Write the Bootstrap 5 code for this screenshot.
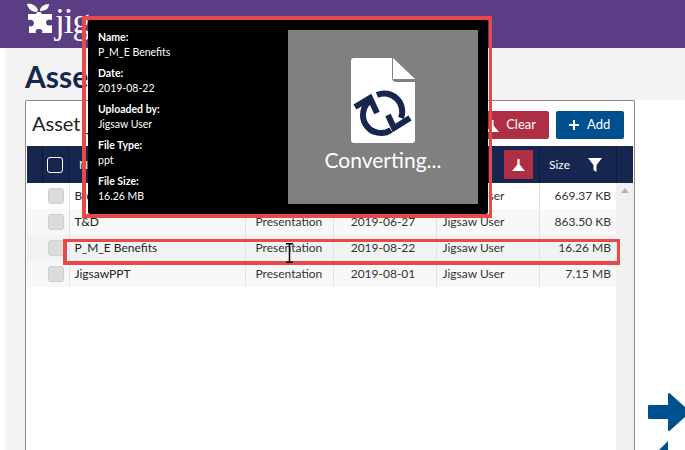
<!DOCTYPE html>
<html lang="en">
<head>
  <meta charset="UTF-8">
  <title>Assets</title>
  <link rel="stylesheet" href="https://cdn.jsdelivr.net/npm/bootstrap@5.3.0/dist/css/bootstrap.min.css">
  <style>
    html, body { height: 450px; overflow: hidden; }
    body { font-family: Lato, "Open Sans", sans-serif; background: #fff; color: #333; position: relative; }

    .top-bar { height: 48px; background: #5a3d82; padding-left: 27px; color: #fff; overflow: hidden; }
    .brand-logo { margin-top: 3px; flex: none; }
    .brand-name { font-family: "Liberation Serif", serif; font-size: 35px; line-height: 44px; margin-left: 2px; letter-spacing: -1px; }

    .page-wrap { margin-left: 5px; background: #f3f3f3; height: 402px; }
    .page-title { height: 52px; margin: 0; padding: 11px 0 0 20px; font-size: 30px; font-weight: 700; color: #16264f; line-height: 34px; }
    .page-row { height: 350px; padding-left: 20px; }
    .side-col { flex: 1; background: #fff; padding: 293px 0 0 13px; overflow: hidden; }
    .arrow-next { display: block; }
    .arrow-prev { display: block; margin-top: 10px; }

    .asset-panel { width: 610px; flex: none; background: #fff; border: 1px solid #8a8a8a; border-bottom: 0; border-radius: 2px 2px 0 0; padding: 0 1px; }
    .panel-head { height: 45px; padding: 10px 9px 0 5px; }
    .panel-name { font-size: 20px; color: #222; line-height: 25px; }
    .act-btn { height: 28px; font-size: 13px; padding: 0 12px; border-radius: 2px; color: #fff; border: 0; display: flex; align-items: center; gap: 7px; }
    .act-clear { background: #b02e44; width: 88px; padding-right: 13px; justify-content: flex-end; }
    .act-add { background: #00508f; width: 68px; margin-left: 7px; }

    .asset-table { table-layout: fixed; width: 589px; margin: 0; font-size: 12px; }
    .asset-table td { height: 26px; padding: 0 5px 0 6px; vertical-align: middle; border: 0; border-right: 1px solid #e2e2e2; color: #333; white-space: nowrap; overflow: hidden; }
    .asset-table tr:nth-child(even) td { background: #f8f8f8; }
    .asset-table tr.row-hover td { background: #f2f2f2; }
    .asset-table td.chk-cell { padding: 0 0 0 21px; }
    .asset-table td.name-cell { padding-left: 5px; color: #222; }
    .asset-table td.type-cell { padding-left: 10px; }
    .asset-table td.date-cell { text-align: center; padding: 0 3px 0 0; }
    .asset-table td.size-cell { text-align: right; padding-right: 5px; border-right: 0; }
    .col-chk { width: 42px; }
    .col-name { width: 176px; }
    .col-type { width: 88px; }
    .col-date, .col-user { width: 103px; }
    .col-size { width: 77px; }

    .head-row { height: 37px; background: #16264f; color: #fff; font-size: 12px; }
    .head-cell { height: 37px; display: flex; align-items: center; border-right: 1px solid #0e1a3a; flex: none; }
    .hc-gap { width: 16px; }
    .hc-chk { width: 26px; padding-left: 4px; }
    .hc-name { width: 176px; padding-left: 10px; }
    .hc-type { width: 88px; }
    .hc-date { width: 103px; }
    .hc-user { width: 104px; padding-right: 6px; justify-content: flex-end; }
    .hc-size { width: 77px; padding-left: 9px; }
    .size-filter { margin-left: auto; margin-right: 14px; }
    .fake-chk { display: block; width: 16px; height: 16px; border-radius: 3px; }
    .fake-chk-head { border: 1px solid #fff; }
    .fake-chk-row { background: #dcdcdc; border: 1px solid #cfcfcf; }
    .filter-red { width: 29px; height: 29px; background: #b02e44; display: flex; align-items: center; justify-content: center; }

    .scroll-rail { width: 18px; flex: none; height: 267px; background: #f0f0f0; padding-top: 5px; }
    .scroll-up { display: block; margin: 0 auto; width: 0; height: 0; border-left: 4px solid transparent; border-right: 4px solid transparent; border-bottom: 5px solid #b5b5b5; }

    /* overlays */
    .preview-tip { position: absolute; left: 88px; top: 20px; width: 400px; height: 194px; background: #000; border-radius: 2px; color: #fff; padding: 10px; font-size: 10.5px; line-height: 15px; }
    .tip-info { width: 190px; margin: 0; padding-top: 0; }
    .tip-info dt { font-weight: 700; margin: 0; }
    .tip-info dd { margin: 0 0 6px; }
    .tip-thumb { width: 190px; height: 174px; background: #808080; color: #fff; font-size: 21px; line-height: 24px; }
    .doc-icon { margin-top: 28px; flex: none; }
    .thumb-label { margin-top: 5px; }
    .mark-box { position: absolute; border: 4px solid #e8484a; pointer-events: none; }
    .mark-tip { left: 82px; top: 16px; width: 410px; height: 202px; border-right-width: 3px; }
    .mark-row { left: 63px; top: 239px; width: 557px; height: 26px; border-width: 3px 3px 4px 4px; }
    .text-cursor { position: absolute; left: 285px; top: 243px; }
  </style>
</head>
<body>

  <!-- top bar -->
  <div class="top-bar d-flex align-items-start">
    <svg class="brand-logo" width="26" height="31" viewBox="0 0 26 31">
      <path fill="#fff" d="M1 11h9c-1-1-1-2 2-2s3 1 2 2h11v6c-2-1-6-1-6 2.500s4 3.500 6 2.500v8H15c1-2 0-4-3-4s-4 2-3 4H2v-7c2 1 5 0 5-3s-3-4-6-3z"/>
      <path fill="#fff" d="M0 1c4-1 9 1 11 6-1 1-1 2-1 2C5 9 1 6 0 1zM13 8c0-4 4-7 9-7 0 5-4 7-9 7z"/>
    </svg>
    <span class="brand-name">jigsaw</span>
  </div>

  <div class="page-wrap">
    <h1 class="page-title">Assets</h1>
    <div class="page-row d-flex">
      <div class="asset-panel">
        <div class="panel-head d-flex align-items-start">
          <span class="panel-name">Asset _</span>
          <button class="act-btn act-clear ms-auto">
            <svg width="13" height="13" viewBox="0 0 13 13"><path fill="#fff" d="M0 13h13L7.600 6.500V1H5.400v5.500z"/></svg>
            Clear
          </button>
          <button class="act-btn act-add">
            <svg width="12" height="12" viewBox="0 0 12 12"><path d="M6 1v10M1 6h10" stroke="#fff" stroke-width="2"/></svg>
            Add
          </button>
        </div>

        <div class="head-row d-flex">
          <div class="head-cell hc-gap"></div>
          <div class="head-cell hc-chk"><span class="fake-chk fake-chk-head"></span></div>
          <div class="head-cell hc-name">Name</div>
          <div class="head-cell hc-type"></div>
          <div class="head-cell hc-date"></div>
          <div class="head-cell hc-user">
            <span class="filter-red">
              <svg width="13" height="13" viewBox="0 0 13 13"><path fill="#fff" d="M0 13h13L7.600 6.500V1H5.400v5.500z"/></svg>
            </span>
          </div>
          <div class="head-cell hc-size">
            Size
            <svg class="size-filter" width="14" height="14" viewBox="0 0 14 14"><path fill="#fff" d="M0 0h14L8.500 7v7L5.500 12V7z"/></svg>
          </div>
        </div>

        <div class="d-flex align-items-start">
          <table class="table asset-table">
            <colgroup>
              <col class="col-chk"><col class="col-name"><col class="col-type">
              <col class="col-date"><col class="col-user"><col class="col-size">
            </colgroup>
            <tbody>
              <tr><td class="chk-cell"><span class="fake-chk fake-chk-row"></span></td><td class="name-cell">Brochure</td><td class="type-cell">Presentation</td><td class="date-cell">2019-06-27</td><td>Jigsaw User</td><td class="size-cell">669.37 KB</td></tr>
              <tr><td class="chk-cell"><span class="fake-chk fake-chk-row"></span></td><td class="name-cell">T&amp;D</td><td class="type-cell">Presentation</td><td class="date-cell">2019-06-27</td><td>Jigsaw User</td><td class="size-cell">863.50 KB</td></tr>
              <tr class="row-hover"><td class="chk-cell"><span class="fake-chk fake-chk-row"></span></td><td class="name-cell">P_M_E Benefits</td><td class="type-cell">Presentation</td><td class="date-cell">2019-08-22</td><td>Jigsaw User</td><td class="size-cell">16.26 MB</td></tr>
              <tr><td class="chk-cell"><span class="fake-chk fake-chk-row"></span></td><td class="name-cell">JigsawPPT</td><td class="type-cell">Presentation</td><td class="date-cell">2019-08-01</td><td>Jigsaw User</td><td class="size-cell">7.15 MB</td></tr>
            </tbody>
          </table>
          <div class="scroll-rail"><span class="scroll-up"></span></div>
        </div>
      </div>

      <div class="side-col">
        <svg class="arrow-next" width="42" height="38" viewBox="0 0 42 38"><path fill="#00508f" stroke="#00508f" stroke-width="2" stroke-linejoin="round" d="M1 13h20V1l20 18-20 18V25H1z"/></svg>
        <svg class="arrow-prev" width="38" height="20" viewBox="0 0 38 20"><path fill="#00508f" d="M20 0v20H0z"/></svg>
      </div>
    </div>
  </div>

  <!-- hover preview -->
  <div class="preview-tip d-flex justify-content-between">
    <dl class="tip-info">
      <dt>Name:</dt><dd>P_M_E Benefits</dd>
      <dt>Date:</dt><dd>2019-08-22</dd>
      <dt>Uploaded by:</dt><dd>Jigsaw User</dd>
      <dt>File Type:</dt><dd>ppt</dd>
      <dt>File Size:</dt><dd>16.26 MB</dd>
    </dl>
    <div class="tip-thumb d-flex flex-column align-items-center">
      <svg class="doc-icon" width="64" height="85" viewBox="0 0 64 85">
        <path fill="#fff" d="M3 0h38v19c0 3 1 5 5 5h18v58c0 2-1 3-3 3H3c-2 0-3-1-3-3V3c0-2 1-3 3-3z"/>
        <path fill="#fff" d="M42 0l22 21H42z"/>
        <g fill="none" stroke="#16264f" stroke-width="6">
          <path d="M20 42A18 18 0 0 0 40 72"/>
          <path d="M26 37A18 18 0 0 1 50 60"/>
          <path d="M4 49l15-9 7 15M59 60L43 70l-6-13"/>
        </g>
      </svg>
      <span class="thumb-label">Converting...</span>
    </div>
  </div>

  <div class="mark-box mark-tip"></div>
  <div class="mark-box mark-row"></div>

  <svg class="text-cursor" width="9" height="20" viewBox="0 0 9 20"><path d="M1 .7h7M1 19.300h7M4.500 1v18" stroke="#000" stroke-width="1.500" fill="none"/></svg>

  <script src="https://cdn.jsdelivr.net/npm/bootstrap@5.3.0/dist/js/bootstrap.bundle.min.js"></script>
</body>
</html>
